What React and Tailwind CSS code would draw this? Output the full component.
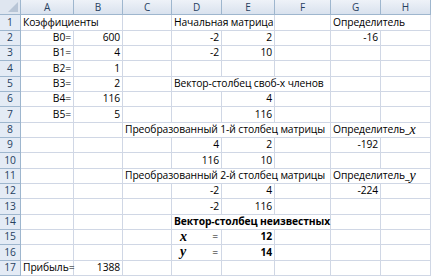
import React from 'react';

const cols = ['A', 'B', 'C', 'D', 'E', 'F', 'G', 'H'];

const X = ({ bold }) => (
    <span className={`italic font-['Liberation_Serif',serif] text-[14px] leading-none ${bold ? 'font-bold' : ''}`}>x</span>
);
const Y = ({ bold }) => (
    <span className={`italic font-['Liberation_Serif',serif] text-[14px] leading-none ${bold ? 'font-bold' : ''}`}>y</span>
);

// each row: list of cells, s = span, r = right aligned, b = bold
const rows = [
    [{ t: 'Коэффициенты', s: 2 }, {}, { t: 'Начальная матрица', s: 2 }, {}, { t: 'Определитель', s: 2 }],
    [{ t: 'B0=', r: 1 }, { t: '600', r: 1 }, {}, { t: '-2', r: 1 }, { t: '2', r: 1 }, {}, { t: '-16', r: 1 }, {}],
    [{ t: 'B1=', r: 1 }, { t: '4', r: 1 }, {}, { t: '-2', r: 1 }, { t: '10', r: 1 }, {}, {}, {}],
    [{ t: 'B2=', r: 1 }, { t: '1', r: 1 }, {}, {}, {}, {}, {}, {}],
    [{ t: 'B3=', r: 1 }, { t: '2', r: 1 }, {}, { t: 'Вектор-столбец своб-х членов', s: 3 }, {}, {}],
    [{ t: 'B4=', r: 1 }, { t: '116', r: 1 }, {}, {}, { t: '4', r: 1 }, {}, {}, {}],
    [{ t: 'B5=', r: 1 }, { t: '5', r: 1 }, {}, {}, { t: '116', r: 1 }, {}, {}, {}],
    [{}, {}, { t: 'Преобразованный 1-й столбец матрицы', s: 4 }, { t: <>Определитель_<X /></>, s: 2 }],
    [{}, {}, {}, { t: '4', r: 1 }, { t: '2', r: 1 }, {}, { t: '-192', r: 1 }, {}],
    [{}, {}, {}, { t: '116', r: 1 }, { t: '10', r: 1 }, {}, {}, {}],
    [{}, {}, { t: 'Преобразованный 2-й столбец матрицы', s: 4 }, { t: <>Определитель_<Y /></>, s: 2 }],
    [{}, {}, {}, { t: '-2', r: 1 }, { t: '4', r: 1 }, {}, { t: '-224', r: 1 }, {}],
    [{}, {}, {}, { t: '-2', r: 1 }, { t: '116', r: 1 }, {}, {}, {}],
    [{}, {}, {}, { t: 'Вектор-столбец неизвестных', s: 3, b: 1 }, {}, {}],
    [{}, {}, {}, { t: 'x', eq: 1 }, { t: '12', r: 1, b: 1 }, {}, {}, {}],
    [{}, {}, {}, { t: 'y', eq: 1 }, { t: '14', r: 1, b: 1 }, {}, {}, {}],
    [{ t: 'Прибыль=' }, { t: '1388', r: 1 }, {}, {}, {}, {}, {}, {}],
];

const spans = { 1: '', 2: 'col-span-2', 3: 'col-span-3', 4: 'col-span-4' };

function Cell({ c }) {
    const base = 'border-r border-b border-[#d0d7e5] flex items-center whitespace-nowrap';
    if (c.eq) {
        return (
            <div className={`${base} justify-between pl-[8px] pr-[3px]`}>
                {c.t === 'x' ? <X bold /> : <Y bold />}
                <span>=</span>
            </div>
        );
    }
    return (
        <div className={`${base} ${spans[c.s || 1]} ${c.r ? 'justify-end pr-[2px]' : 'pl-[2px]'} ${c.b ? 'font-bold' : ''}`}>
            {c.t}
        </div>
    );
}

export default function App() {
    return (
        <div className="w-[431px] h-[276px] bg-white overflow-hidden font-['Open_Sans',sans-serif] text-[10.3px] tracking-[-0.1px] text-black">
            <div className="grid h-[276px] grid-cols-[21px_53px_49px_49px_50px_53px_56px_50px_1fr] grid-rows-[repeat(18,minmax(0,1fr))]">
                {/* corner */}
                <div className="relative bg-[#dfe6f0] border-r border-b border-[#9eb6ce]">
                    <div className="absolute right-[2px] bottom-[2px] w-0 h-0 border-l-[10px] border-l-transparent border-b-[10px] border-b-[#b8c5d6]" />
                </div>
                {cols.map((l) => (
                    <div
                        key={l}
                        className="flex items-center justify-center bg-gradient-to-b from-[#eef2f8] to-[#d9e2ee] border-r border-b border-[#9eb6ce] text-[#27415f] text-[10px]"
                    >
                        {l}
                    </div>
                ))}
                {rows.map((row, i) => (
                    <React.Fragment key={i}>
                        <div className="flex items-center justify-center bg-[#e4ebf5] border-r border-b border-[#9eb6ce] text-[#27415f]">
                            {i + 1}
                        </div>
                        {row.map((c, j) => (
                            <Cell key={j} c={c} />
                        ))}
                    </React.Fragment>
                ))}
            </div>
        </div>
    );
}
